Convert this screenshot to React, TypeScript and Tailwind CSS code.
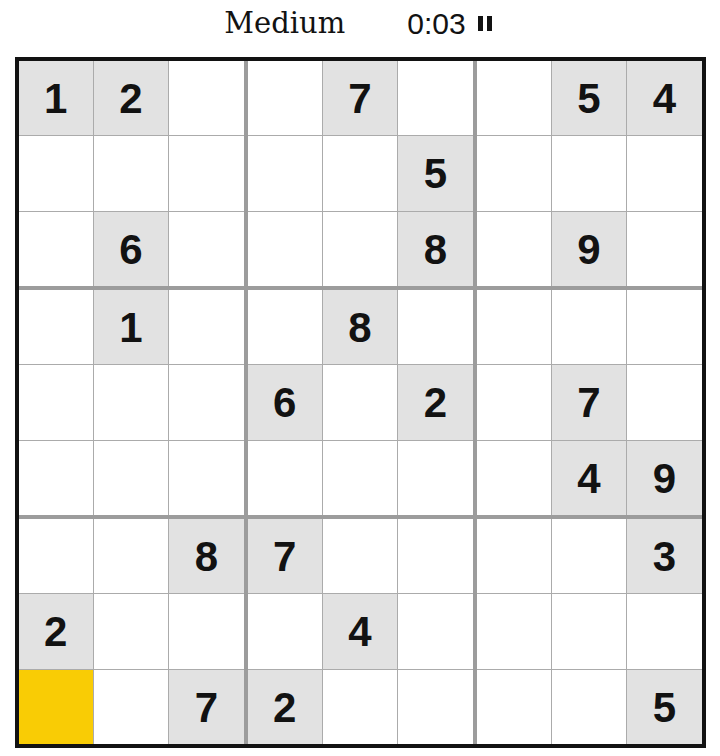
const puzzle = [
  "12__7__54",
  "_____5___",
  "_6___8_9_",
  "_1__8____",
  "___6_2_7_",
  "_______49",
  "__87____3",
  "2___4____",
  "__72____5",
];

function Cell({ r, c }: { r: number; c: number }) {
  const ch = puzzle[r][c];
  const selected = r === 8 && c === 0;
  const given = ch !== "_";
  return (
    <div
      className={
        "flex items-center justify-center pt-[2px] text-[42px] font-bold leading-none text-[#121212] " +
        (selected ? "bg-[#f9cc05]" : given ? "bg-[#e2e2e2]" : "bg-white")
      }
      style={{ fontFamily: '"Liberation Sans", Arial, sans-serif' }}
    >
      {given ? ch : ""}
    </div>
  );
}

function Box({ br, bc }: { br: number; bc: number }) {
  const cells = [];
  for (let i = 0; i < 3; i++) {
    for (let j = 0; j < 3; j++) {
      cells.push(<Cell key={`${i}-${j}`} r={br * 3 + i} c={bc * 3 + j} />);
    }
  }
  return <div className="grid grid-cols-3 grid-rows-3 gap-px bg-[#ababab]">{cells}</div>;
}

export default function App() {
  const boxes = [];
  for (let i = 0; i < 3; i++) {
    for (let j = 0; j < 3; j++) {
      boxes.push(<Box key={`${i}-${j}`} br={i} bc={j} />);
    }
  }
  return (
    <div className="min-h-[756px] w-[720px] bg-white">
      <header className="flex h-[57px] items-center justify-center gap-[62px] pb-[10px] pr-[4px] text-[#121212]">
        <span
          className="text-[29px] leading-none"
          style={{ fontFamily: '"DejaVu Serif", "Liberation Serif", serif' }}
        >
          Medium
        </span>
        <div className="flex items-center gap-[12px]">
          <span
            className="text-[30px] leading-none"
            style={{ fontFamily: '"Liberation Sans", Arial, sans-serif' }}
          >
            0:03
          </span>
          <div className="flex gap-[4px]">
            <div className="h-[15px] w-[5px] bg-[#121212]" />
            <div className="h-[15px] w-[5px] bg-[#121212]" />
          </div>
        </div>
      </header>
      <div className="mx-auto grid h-[691px] w-[691px] grid-cols-3 grid-rows-3 gap-[4px] border-[4px] border-[#121212] bg-[#9c9c9c]">
        {boxes}
      </div>
    </div>
  );
}
